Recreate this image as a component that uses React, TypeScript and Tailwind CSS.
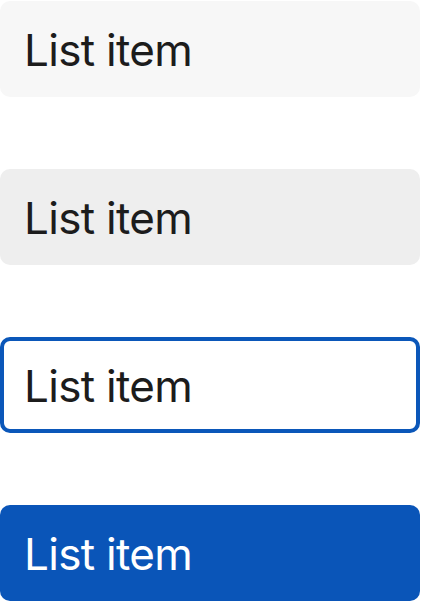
export default function App() {
  const font = { fontFamily: 'Inter, "Noto Sans", sans-serif' };
  return (
    <div className="w-[421px] h-[601px] bg-white flex flex-col gap-[72px] pt-[1px]" style={font}>
      <div className="w-[420px] h-[96px] rounded-[10px] bg-[#f7f7f7] flex items-center pl-6 pt-[2px] text-[44px] font-[380] tracking-[-0.7px] text-[#1c1c1c]">
        List item
      </div>
      <div className="w-[420px] h-[96px] rounded-[10px] bg-[#eeeeee] flex items-center pl-6 pt-[2px] text-[44px] font-[380] tracking-[-0.7px] text-[#1c1c1c]">
        List item
      </div>
      <div className="w-[420px] h-[96px] rounded-[10px] bg-white border-4 border-[#0b57b9] flex items-center pl-5 pt-[2px] text-[44px] font-[380] tracking-[-0.7px] text-[#1c1c1c]">
        List item
      </div>
      <div className="w-[420px] h-[96px] rounded-[10px] bg-[#0a55b8] flex items-center pl-6 pt-[2px] text-[44px] font-[380] tracking-[-0.7px] text-white">
        List item
      </div>
    </div>
  );
}
